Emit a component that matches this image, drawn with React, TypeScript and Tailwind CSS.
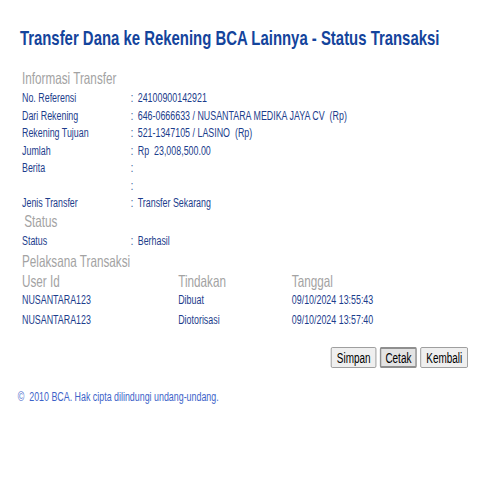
import React from "react";

const rows: [string, string][] = [
  ["No. Referensi", "24100900142921"],
  ["Dari Rekening", "646-0666633 / NUSANTARA MEDIKA JAYA CV  (Rp)"],
  ["Rekening Tujuan", "521-1347105 / LASINO  (Rp)"],
  ["Jumlah", "Rp  23,008,500.00"],
  ["Berita", ""],
  ["", ""],
  ["Jenis Transfer", "Transfer Sekarang"],
];

function Row({ label, value }: { label: string; value: string }) {
  return (
    <div className="flex h-[17.5px] items-center text-[12.5px] text-[#1c3d8c]">
      <div className="w-[153px]">{label}</div>
      <div className="w-[10px]">:</div>
      <div className="whitespace-pre">{value}</div>
    </div>
  );
}

export default function App() {
  return (
    <div className="h-[500px] w-[500px] overflow-hidden bg-white">
      <div
        className="w-[704px] origin-top-left scale-x-[0.71] pl-[28px] pt-[26px]"
        style={{ fontFamily: '"Liberation Sans", Arial, sans-serif' }}
      >
        <h1 className="text-[21px] font-bold leading-[24px] text-[#14449c]">
          Transfer Dana ke Rekening BCA Lainnya - Status Transaksi
        </h1>
        <div className="mt-[19px] pl-[3px]">
          <div className="text-[16.5px] leading-[19px] text-[#a3a3a3]">Informasi Transfer</div>
          <div className="mt-[2px]">
            {rows.map(([l, v], i) => (
              <Row key={i} label={l} value={v} />
            ))}
          </div>
          <div className="pl-[3px] text-[16.5px] leading-[17px] text-[#a3a3a3]">Status</div>
          <div className="mt-[3px]">
            <Row label="Status" value="Berhasil" />
          </div>
          <div className="mt-[1px] text-[16.5px] leading-[21px] text-[#a3a3a3]">Pelaksana Transaksi</div>
          <div className="mt-[1px] grid grid-cols-[220px_160px_1fr] text-[16.5px] leading-[17px] text-[#a3a3a3]">
            <div>User Id</div>
            <div>Tindakan</div>
            <div>Tanggal</div>
          </div>
          <div className="grid grid-cols-[220px_160px_1fr] text-[12.5px] leading-[20px] text-[#1c3d8c]">
            <div>NUSANTARA123</div>
            <div>Dibuat</div>
            <div>09/10/2024 13:55:43</div>
            <div>NUSANTARA123</div>
            <div>Diotorisasi</div>
            <div>09/10/2024 13:57:40</div>
          </div>
        </div>
        <div className="mt-[17px] flex justify-end gap-[5px] pr-[45px]">
          <button className="h-[21px] rounded-[2px] border border-[#8f8f8f] bg-[#efefef] px-[7px] text-[14px] leading-none text-black">
            Simpan
          </button>
          <button className="h-[21px] rounded-[2px] border-2 border-[#8f8f8f] bg-[#e3e3e3] px-[6px] text-[14px] leading-none text-black">
            Cetak
          </button>
          <button className="h-[21px] rounded-[2px] border border-[#8f8f8f] bg-[#efefef] px-[7px] text-[14px] leading-none text-black">
            Kembali
          </button>
        </div>
        <div className="mt-[20px] text-[12.5px] text-[#3d63c9]" style={{ marginLeft: -3 }}>
          ©&nbsp; 2010 BCA. Hak cipta dilindungi undang-undang.
        </div>
      </div>
    </div>
  );
}
